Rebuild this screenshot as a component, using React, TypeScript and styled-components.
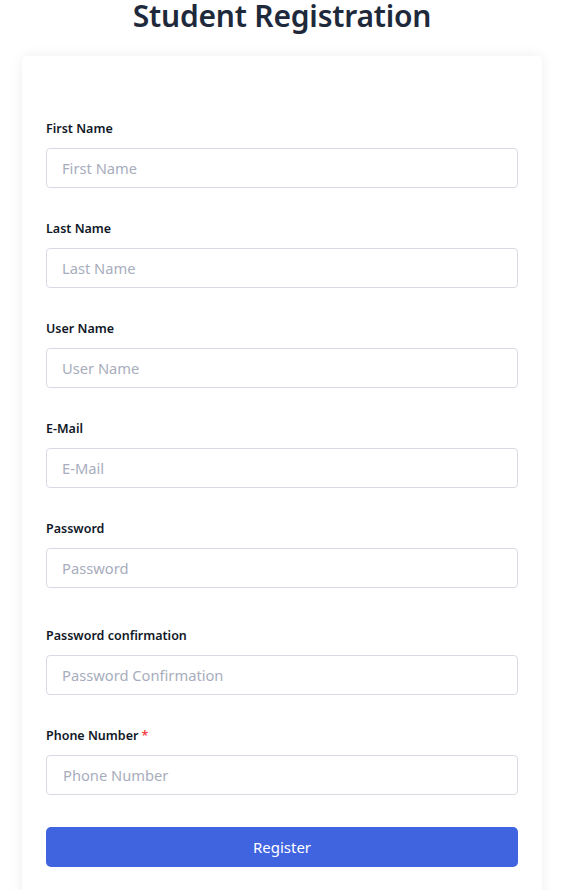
import React from "react";
import styled, { createGlobalStyle } from "styled-components";

const Global = createGlobalStyle`
  html, body { margin: 0; padding: 0; background: #ffffff; }
  body { font-family: "Noto Sans", "Open Sans", sans-serif; color: #1a202c; }
  * { box-sizing: border-box; }
`;

const Page = styled.div`
  display: flex;
  flex-direction: column;
  align-items: center;
  padding: 0 21px 0 22px;
`;

const Title = styled.h1`
  margin: 0;
  font-size: 30px;
  line-height: 32px;
  font-weight: 600;
  color: #1e293b;
  letter-spacing: -0.2px;
`;

const Card = styled.form`
  margin-top: 24px;
  width: 520px;
  background: #ffffff;
  border-radius: 5px;
  box-shadow: 0 0 14px rgba(0, 0, 0, 0.07);
  padding: 64px 24px 40px;
  display: flex;
  flex-direction: column;
`;

const Field = styled.div<{ $extra?: number }>`
  display: flex;
  flex-direction: column;
  gap: 11px;
  margin-bottom: ${(p) => 32 + (p.$extra ?? 0)}px;
`;

const Label = styled.label`
  font-size: 12.5px;
  font-weight: 600;
  line-height: 17px;
  color: #111827;
`;

const Star = styled.span`
  color: #ef4444;
  margin-left: 3px;
`;

const Input = styled.input<{ $shift?: number }>`
  height: 40px;
  width: 100%;
  border: 1px solid #d8dbe3;
  border-radius: 4px;
  padding: 0 0 0 ${(p) => 15 + (p.$shift ?? 0)}px;
  font-family: inherit;
  font-size: 14.7px;
  color: #1a202c;
  outline: none;
  &::placeholder { color: #a8adbd; }
`;

const Button = styled.button`
  height: 40px;
  width: 100%;
  border: none;
  border-radius: 5px;
  background: #4064e0;
  color: #ffffff;
  font-family: inherit;
  font-size: 15px;
  cursor: pointer;
`;

const fields = [
  { label: "First Name", ph: "First Name" },
  { label: "Last Name", ph: "Last Name" },
  { label: "User Name", ph: "User Name" },
  { label: "E-Mail", ph: "E-Mail" },
  { label: "Password", ph: "Password", extra: 7 },
  { label: "Password confirmation", ph: "Password Confirmation" },
  { label: "Phone Number", ph: "Phone Number", required: true },
];

export default function App() {
  return (
    <Page>
      <Global />
      <Title>Student Registration</Title>
      <Card onSubmit={(e) => e.preventDefault()}>
        {fields.map((f) => (
          <Field key={f.label} $extra={f.extra}>
            <Label>
              {f.label}
              {f.required && <Star>*</Star>}
            </Label>
            <Input placeholder={f.ph} $shift={f.required ? 1 : 0} />
          </Field>
        ))}
        <Button type="submit">Register</Button>
      </Card>
    </Page>
  );
}
